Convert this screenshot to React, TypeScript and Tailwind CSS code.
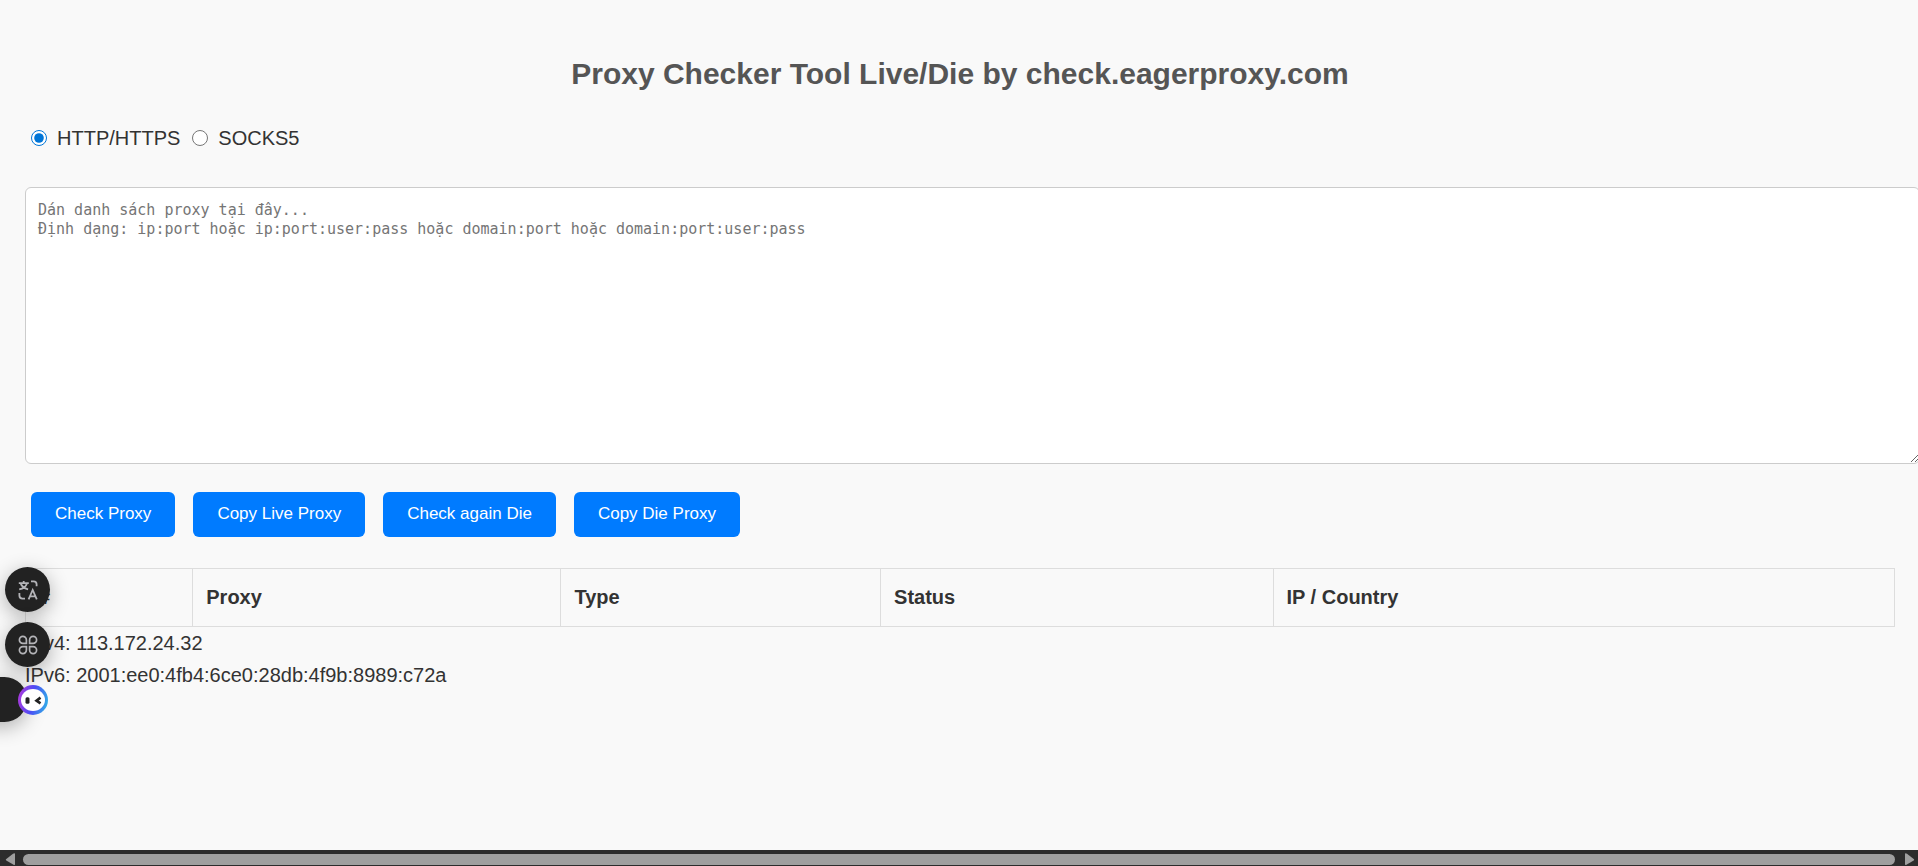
import { useState } from 'react';

const PROXY_TYPES = ['HTTP/HTTPS', 'SOCKS5'];

const ACTIONS = ['Check Proxy', 'Copy Live Proxy', 'Check again Die', 'Copy Die Proxy'];

const COLUMNS = [
  { label: '#', width: 'w-[8.95%]' },
  { label: 'Proxy', width: 'w-[19.7%]' },
  { label: 'Type', width: 'w-[17.1%]' },
  { label: 'Status', width: 'w-[21%]' },
  { label: 'IP / Country', width: 'w-[33.25%]' },
];

const PLACEHOLDER =
  'Dán danh sách proxy tại đây...\nĐịnh dạng: ip:port hoặc ip:port:user:pass hoặc domain:port hoặc domain:port:user:pass';

function TranslateIcon() {
  return (
    <svg viewBox="0 0 20 20" className="size-5" fill="none" stroke="#b4b4b8" strokeWidth="1.8">
      <path d="M.8 3.200h10M5.700 1v2.200M8.900 3.400C8 6.300 5 8.600 1.200 9.400M2.700 3.400c.9 2.800 3.600 5 7.400 5.900" />
      <path d="M13 1.300h2.600a3 3 0 0 1 3 3v2" />
      <path d="M1.400 13v2.600a3 3 0 0 0 3 3H7" />
      <path d="M10.600 19.300l4.100-9.300 4.100 9.300M12 16.400h5.500" />
    </svg>
  );
}

function AppsIcon() {
  return (
    <svg viewBox="0 0 20 20" className="size-5" fill="none" stroke="#b4b4b8" strokeWidth="1.7">
      <path d="M8.400 8.400H4.900a3.500 3.500 0 1 1 3.500-3.500z" />
      <path d="M11.600 8.400h3.500a3.500 3.500 0 1 0-3.500-3.500z" />
      <path d="M8.400 11.600H4.900a3.500 3.500 0 1 0 3.500 3.500z" />
      <path d="M11.600 11.600h3.500a3.500 3.500 0 1 1-3.500 3.500z" />
    </svg>
  );
}

function BotIcon() {
  return (
    <svg viewBox="0 0 30 30" className="size-[30px]">
      <defs>
        <linearGradient id="ring" x1="0" y1="0.6" x2="1" y2="0.8">
          <stop offset="0" stopColor="#a33be0" />
          <stop offset="0.45" stopColor="#4b4cf5" />
          <stop offset="1" stopColor="#2fb4e6" />
        </linearGradient>
      </defs>
      <circle cx="15" cy="15" r="15" fill="url(#ring)" />
      <ellipse cx="15" cy="15" rx="12" ry="11" fill="#fff" />
      <rect x="7.500" y="12.300" width="4" height="6.500" rx="1.500" fill="#222" />
      <path d="M22.500 12.600l-4 3 4 2.800" fill="none" stroke="#222" strokeWidth="2.600" />
    </svg>
  );
}

function FloatingTools() {
  const bubble =
    'flex size-[45px] items-center justify-center rounded-full bg-[#222222] shadow-[0_5px_20px_rgba(0,0,0,0.3)]';

  return (
    <div className="fixed top-[567px] left-[5px] flex flex-col gap-[10px]">
      <button type="button" aria-label="Translate" className={bubble}>
        <TranslateIcon />
      </button>
      <button type="button" aria-label="Apps" className={bubble}>
        <AppsIcon />
      </button>
      <button type="button" aria-label="Assistant" className="relative size-[45px]">
        <span className="absolute top-0 -left-8 h-[45px] w-[54px] rounded-full bg-[#222222] shadow-[0_5px_20px_rgba(0,0,0,0.3)]" />
        <span className="absolute top-2 left-[13px]">
          <BotIcon />
        </span>
      </button>
    </div>
  );
}

function BottomScrollbar() {
  return (
    <div className="fixed inset-x-0 bottom-0 flex h-4 items-end bg-[#2c2c2c] pr-[3px] pb-px pl-[5px]">
      <svg viewBox="0 0 10 12" className="h-3 w-[10px]" fill="#9f9f9f">
        <path d="M10 1v10.500q0 .5-1 .4L1.300 7.400Q.4 6.700 1.300 6L8 .8Q10-.2 10 1z" />
      </svg>
      <div className="mr-[10px] ml-2 h-[11px] flex-1 rounded-full bg-[#9f9f9f]" />
      <svg viewBox="0 0 10 12" className="h-3 w-[10px]" fill="#9f9f9f">
        <path d="M0 1v10.500q0 .5 1 .4l7.700-4.500q.9-.7 0-1.400L2 .8Q0-.2 0 1z" />
      </svg>
    </div>
  );
}

export default function App() {
  const [proxyType, setProxyType] = useState(PROXY_TYPES[0]);
  const [proxies, setProxies] = useState('');

  return (
    <div className="min-h-screen overflow-x-hidden bg-[#f9f9f9] pt-[25px] pr-[23px] pb-[25px] pl-[25px] font-['Liberation_Sans',Arial,sans-serif] text-xl leading-8 text-[#333333]">
      <h2 className="mt-[25px] mb-6 text-center text-[30px] leading-[48px] font-bold text-[#555555]">
        Proxy Checker Tool Live/Die by check.eagerproxy.com
      </h2>

      <div className="flex gap-3 pl-[6px]">
        {PROXY_TYPES.map((type) => (
          <label key={type} className="flex items-center gap-[10px]">
            <input
              type="radio"
              name="proxyType"
              checked={proxyType === type}
              onChange={() => setProxyType(type)}
              className="size-4 accent-[#0075d7]"
            />
            {type}
          </label>
        ))}
      </div>

      <textarea
        aria-label="Proxy list"
        value={proxies}
        onChange={(e) => setProxies(e.target.value)}
        placeholder={PLACEHOLDER}
        className="mt-[33px] block h-[277px] w-[calc(100%+25px)] resize rounded-md border border-[#cccccc] bg-white p-[13px] pl-3 font-['DejaVu_Sans_Mono',monospace] text-[15px] leading-[19px] placeholder:text-[#757575]"
      />

      <div className="mt-7 flex gap-[18px] pl-[6px]">
        {ACTIONS.map((action) => (
          <button
            key={action}
            type="button"
            className="h-[45px] rounded-md bg-[#007bff] px-6 pb-0.5 text-[17px] leading-5 text-white hover:bg-[#0056b3]"
          >
            {action}
          </button>
        ))}
      </div>

      <table className="mt-[31px] w-full table-fixed border-collapse">
        <thead>
          <tr>
            {COLUMNS.map((col) => (
              <th
                key={col.label}
                className={`${col.width} border border-[#dddddd] px-[13px] pt-3 pb-[13px] text-left font-bold`}
              >
                {col.label}
              </th>
            ))}
          </tr>
        </thead>
        <tbody />
      </table>

      <p>IPv4: 113.172.24.32</p>
      <p>IPv6: 2001:ee0:4fb4:6ce0:28db:4f9b:8989:c72a</p>

      <FloatingTools />
      <BottomScrollbar />
    </div>
  );
}
